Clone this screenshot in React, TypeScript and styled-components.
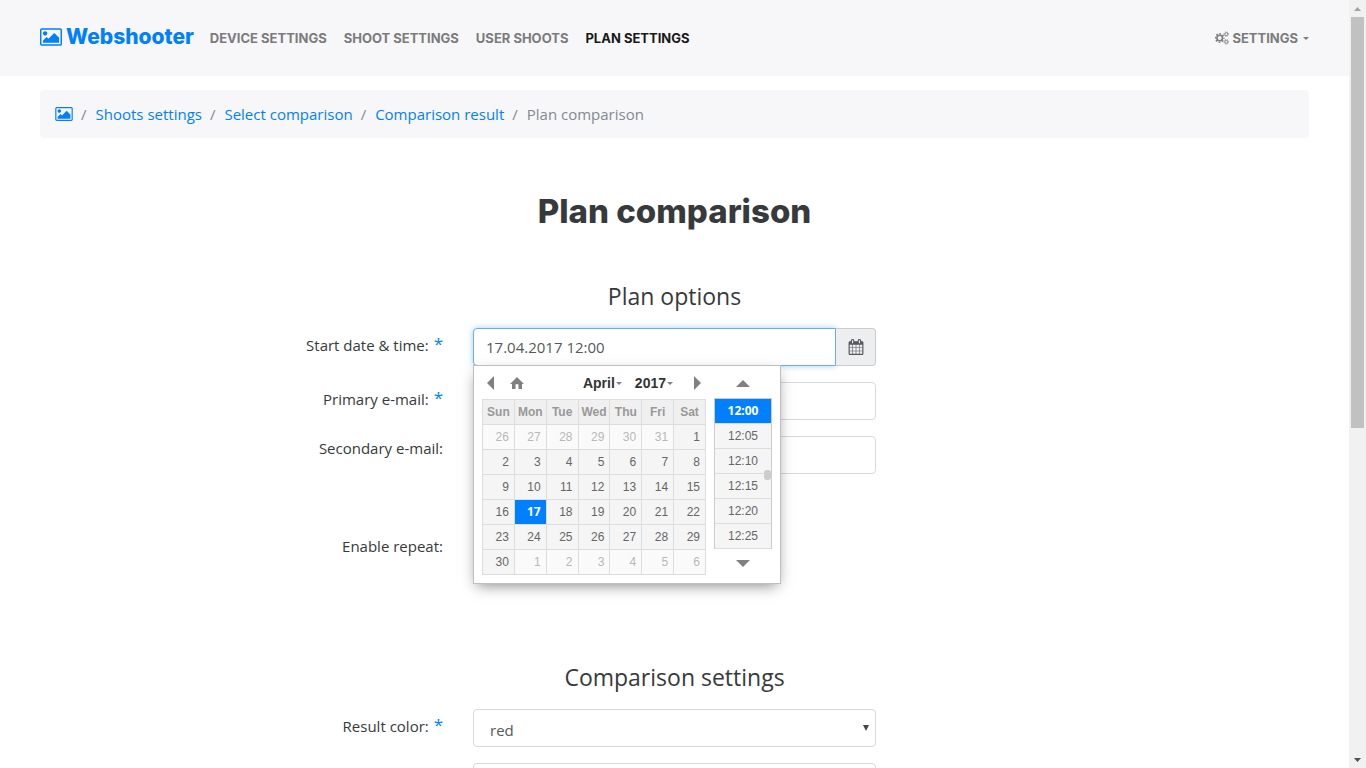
import React from "react";
import styled, { createGlobalStyle, css } from "styled-components";

const blue = "#007fff";
const bodyFont = `"Open Sans", "Noto Sans", sans-serif`;
const displayFont = `Inter, "Liberation Sans", sans-serif`;

const GlobalStyle = createGlobalStyle`
  *, *::before, *::after { box-sizing: border-box; }
  body {
    margin: 0;
    background: #fff;
    color: #373a3c;
    font: 15px/24px ${bodyFont};
  }
  button, input, select { font: inherit; color: inherit; }
  button { padding: 0; border: 0; background: none; cursor: pointer; }
  a { color: ${blue}; text-decoration: none; }
  svg { display: block; }
`;

const Screen = styled.div`
  display: grid;
  grid-template-columns: minmax(0, 1fr) 17px;
  height: 100vh;
  overflow: hidden;
`;

const Page = styled.div`
  overflow: hidden;
`;

const Navbar = styled.nav`
  display: flex;
  align-items: center;
  height: 76px;
  padding: 0 40px;
  background: #f7f7f9;
  font-family: ${displayFont};
`;

const Brand = styled.a`
  display: flex;
  align-items: center;
  gap: 4px;
  margin-right: 16px;
  padding-bottom: 2px;
  font-size: 21px;
  font-weight: 800;
`;

const NavList = styled.ul`
  display: flex;
  gap: 17px;
  margin: 0;
  padding: 0;
  list-style: none;
`;

const navText = css`
  font-size: 13px;
  font-weight: 700;
  text-transform: uppercase;
`;

const NavLink = styled.a<{ $active?: boolean }>`
  ${navText}
  color: ${(p) => (p.$active ? "#19191a" : "#7b7b7d")};
`;

const SettingsButton = styled.button`
  ${navText}
  display: flex;
  align-items: center;
  gap: 3px;
  margin-left: auto;
  color: #7b7b7d;
`;

const Caret = styled.span<{ $size: number }>`
  display: inline-block;
  margin-left: ${(p) => p.$size - 1}px;
  border: ${(p) => p.$size}px solid transparent;
  border-top-color: currentColor;
  border-bottom: 0;
`;

const Main = styled.main`
  padding: 14px 40px;
`;

const Breadcrumb = styled.ol`
  display: flex;
  align-items: center;
  height: 48px;
  margin: 0;
  padding: 0 15px;
  border-radius: 4px;
  background: #f7f7f9;
  list-style: none;
`;

const Crumb = styled.li`
  display: flex;
  align-items: center;
  color: #818a91;
  & + &::before {
    content: "/";
    padding: 0 9px 0 8px;
  }
`;

const Title = styled.h1`
  margin: 53px 0 0;
  font: 800 33px/40px ${displayFont};
  text-align: center;
`;

const SectionTitle = styled.h2<{ $top: number }>`
  margin: ${(p) => p.$top}px 0 17px;
  font-size: 23px;
  font-weight: 400;
  line-height: 30px;
  text-align: center;
`;

const FormRow = styled.div`
  display: grid;
  grid-template-columns: repeat(3, minmax(0, 1fr));
  column-gap: 30px;
  min-height: 38px;
  margin-bottom: 16px;
`;

const Label = styled.label<{ $required?: boolean }>`
  padding-top: ${(p) => (p.$required ? 5 : 0)}px;
  text-align: right;
`;

const Star = styled.span`
  margin-left: 1px;
  color: ${blue};
  font-size: 17px;
  line-height: 1;
  vertical-align: 1px;
`;

const Field = styled.div`
  position: relative;
`;

const control = css`
  width: 100%;
  height: 38px;
  padding: 0 12px;
  border: 1px solid #d9d9d9;
  border-radius: 4px;
  background: #fff;
  color: #55595c;
  outline: none;
`;

const TextInput = styled.input`
  ${control}
`;

const InputGroup = styled.div`
  display: flex;
`;

const DateInput = styled.input`
  ${control}
  flex: 1;
  border-color: #66afe9;
  border-radius: 4px 0 0 4px;
  box-shadow: 0 0 6px rgba(102, 175, 233, 0.6);
`;

const CalendarButton = styled.button`
  display: grid;
  place-items: center;
  width: 40px;
  height: 38px;
  border: 1px solid #ccc;
  border-left: 0;
  border-radius: 0 4px 4px 0;
  background: #eceeef;
`;

const Select = styled.select`
  ${control}
  padding: 4px 16px 0;
  appearance: none;
`;

const SelectArrow = styled.svg`
  position: absolute;
  top: 16px;
  right: 7px;
  pointer-events: none;
`;

const CheckRow = styled(FormRow)`
  margin-top: 60px;
`;

const CheckBox = styled.input`
  width: 13px;
  height: 13px;
  margin: 6px 0;
`;

const Picker = styled.div`
  position: absolute;
  z-index: 2;
  top: 37px;
  left: 0;
  display: flex;
  gap: 8px;
  padding: 8px;
  border: 1px solid #bfbfbf;
  background: #fff;
  box-shadow: 0 5px 14px -4px rgba(0, 0, 0, 0.5);
  color: #666;
  font: 12px/24px "Liberation Sans", Arial, sans-serif;
`;

const PickerHead = styled.div`
  display: flex;
  align-items: center;
  height: 18px;
  margin-bottom: 7px;
  padding: 0 5px;
`;

const IconButton = styled.button`
  display: grid;
  place-items: center;
  color: #808080;
`;

const HomeButton = styled(IconButton)`
  margin: 0 auto 0 16px;
`;

const MonthButton = styled.button`
  display: flex;
  align-items: center;
  margin-right: 13px;
  color: #333;
  font-size: 14px;
  font-weight: 700;
`;

const NextButton = styled(IconButton)`
  margin-left: 8px;
`;

const SmallCaret = styled(Caret)`
  margin-left: 1px;
  color: #808080;
`;

const Days = styled.table`
  width: 224px;
  border-collapse: collapse;
  table-layout: fixed;
`;

const DayName = styled.th`
  height: 25px;
  padding: 0;
  border: 1px solid #ddd;
  background: #f0f0f0;
  color: #999;
`;

const Day = styled.td<{ $off?: boolean; $selected?: boolean }>`
  height: 25px;
  padding: 0 5px 0 0;
  border: 1px solid #ddd;
  background: #f5f5f5;
  text-align: right;
  ${(p) => p.$off && css`background: #fafafa; color: #b8b8b8;`}
  ${(p) => p.$selected && css`background: ${blue}; color: #fff; font-family: ${bodyFont}; font-weight: 700;`}
`;

const Times = styled.div`
  width: 58px;
`;

const TimeArrow = styled(IconButton)`
  width: 100%;
  height: 18px;
`;

const TimeList = styled.div`
  position: relative;
  margin: 6px 0 5px;
  border: 1px solid #ccc;
  border-bottom: 0;
`;

const Time = styled.button<{ $selected?: boolean }>`
  display: block;
  width: 100%;
  height: 25px;
  border-bottom: 1px solid #ddd;
  background: #f5f5f5;
  line-height: 24px;
  ${(p) => p.$selected && css`background: ${blue}; color: #fff; font-family: ${bodyFont}; font-weight: 700;`}
`;

const TimeThumb = styled.span`
  position: absolute;
  top: 71px;
  right: 0;
  width: 7px;
  height: 10px;
  border-radius: 3px;
  background: #ccc;
`;

const ScrollTrack = styled.div`
  display: flex;
  flex-direction: column;
  align-items: center;
  background: #f1f1f1;
`;

const ScrollEnd = styled.div<{ $color: string }>`
  display: grid;
  place-items: center;
  height: 17px;
  color: ${(p) => p.$color};
`;

const ScrollThumb = styled.div`
  flex: 56;
  width: 13px;
  background: #c1c1c1;
`;

const ScrollRest = styled.div`
  flex: 44;
`;

const Picture = ({ width, height }: { width: number; height: number }) => (
  <svg width={width} height={height} viewBox="0 128 1920 1536" fill={blue} aria-hidden="true">
    <path d="M640 576q0 80-56 136t-136 56-136-56-56-136 56-136 136-56 136 56 56 136zm1024 384v448h-1408v-192l320-320 160 160 512-512zm96-704h-1600q-13 0-22.5 9.5t-9.5 22.5v1216q0 13 9.5 22.5t22.5 9.5h1600q13 0 22.5-9.5t9.5-22.5v-1216q0-13-9.5-22.5t-22.5-9.5zm160 32v1216q0 66-47 113t-113 47h-1600q-66 0-113-47t-47-113v-1216q0-66 47-113t113-47h1600q66 0 113 47t47 113z" />
  </svg>
);

const CalendarIcon = () => (
  <svg width="16" height="16" viewBox="0 0 1792 1792" fill="#55595c" aria-hidden="true">
    <path d="M192 1664h288v-288h-288v288zm352 0h320v-288h-320v288zm-352-352h288v-320h-288v320zm352 0h320v-320h-320v320zm-352-384h288v-288h-288v288zm736 736h320v-288h-320v288zm-384-736h320v-288h-320v288zm768 736h288v-288h-288v288zm-384-352h320v-320h-320v320zm-352-864v-288q0-13-9.5-22.5t-22.5-9.5h-64q-13 0-22.5 9.5t-9.5 22.5v288q0 13 9.5 22.5t22.5 9.5h64q13 0 22.5-9.5t9.5-22.5zm736 864h288v-320h-288v320zm-384-384h320v-288h-320v288zm384 0h288v-288h-288v288zm32-480v-288q0-13-9.5-22.5t-22.5-9.5h-64q-13 0-22.5 9.5t-9.5 22.5v288q0 13 9.5 22.5t22.5 9.5h64q13 0 22.5-9.5t9.5-22.5zm384-64v1280q0 52-38 90t-90 38h-1408q-52 0-90-38t-38-90v-1280q0-52 38-90t90-38h128v-96q0-66 47-113t113-47h64q66 0 113 47t47 113v96h384v-96q0-66 47-113t113-47h64q66 0 113 47t47 113v96h128q52 0 90 38t38 90z" />
  </svg>
);

const Gear = ({ cx, cy, r, w }: { cx: number; cy: number; r: number; w: number }) => {
  const tooth = (2 * Math.PI * (r + w * 0.9)) / 16;
  return (
    <g fill="none" stroke="currentColor">
      <circle cx={cx} cy={cy} r={r} strokeWidth={w} />
      <circle cx={cx} cy={cy} r={r + w * 0.9} strokeWidth={w * 0.9} strokeDasharray={`${tooth} ${tooth}`} strokeDashoffset={tooth / 2} />
    </g>
  );
};

const Cogs = () => (
  <svg width="14" height="14" viewBox="0 0 14 14" aria-hidden="true">
    <Gear cx={4.7} cy={7} r={2.8} w={1.6} />
    <Gear cx={11.3} cy={3.2} r={1.5} w={0.9} />
    <Gear cx={11.3} cy={10.8} r={1.5} w={0.9} />
  </svg>
);

const Triangle = ({ w, h, points }: { w: number; h: number; points: string }) => (
  <svg width={w} height={h} viewBox={`0 0 ${w} ${h}`} fill="currentColor" aria-hidden="true">
    <polygon points={points} />
  </svg>
);

const Required = () => <Star aria-hidden="true">*</Star>;

const navItems = ["Device settings", "Shoot settings", "User shoots", "Plan settings"];
const crumbs = ["Shoots settings", "Select comparison", "Comparison result"];
const dayNames = ["Sun", "Mon", "Tue", "Wed", "Thu", "Fri", "Sat"];
const times = ["12:00", "12:05", "12:10", "12:15", "12:20", "12:25"];

const weeks = Array.from({ length: 6 }, (_, week) =>
  Array.from({ length: 7 }, (_, day) => {
    const date = new Date(2017, 2, 26 + week * 7 + day);
    return { date: date.getDate(), off: date.getMonth() !== 3 };
  })
);

const DateTimePicker = () => (
  <Picker role="dialog" aria-label="Choose date and time">
    <div>
      <PickerHead>
        <IconButton type="button" aria-label="Previous month">
          <Triangle w={7} h={14} points="7,0 7,14 0,7" />
        </IconButton>
        <HomeButton type="button" aria-label="Today">
          <svg width="14" height="12" viewBox="0 0 14 12" fill="currentColor" aria-hidden="true">
            <path d="M7 0L14 7H12V12H8.5V8Q8.5 7 7 7Q5.500 7 5.500 8V12H2V7H0Z" />
          </svg>
        </HomeButton>
        <MonthButton type="button">April<SmallCaret $size={3} /></MonthButton>
        <MonthButton type="button">2017<SmallCaret $size={3} /></MonthButton>
        <NextButton type="button" aria-label="Next month">
          <Triangle w={7} h={14} points="0,0 7,7 0,14" />
        </NextButton>
      </PickerHead>
      <Days>
        <thead>
          <tr>{dayNames.map((name) => <DayName key={name}>{name}</DayName>)}</tr>
        </thead>
        <tbody>
          {weeks.map((week, i) => (
            <tr key={i}>
              {week.map(({ date, off }) => (
                <Day key={date} $off={off} $selected={!off && date === 17}>{date}</Day>
              ))}
            </tr>
          ))}
        </tbody>
      </Days>
    </div>
    <Times>
      <TimeArrow type="button" aria-label="Earlier">
        <Triangle w={14} h={7} points="7,0 14,7 0,7" />
      </TimeArrow>
      <TimeList>
        {times.map((time) => (
          <Time type="button" key={time} $selected={time === "12:00"}>{time}</Time>
        ))}
        <TimeThumb />
      </TimeList>
      <TimeArrow type="button" aria-label="Later">
        <Triangle w={14} h={7} points="0,0 14,0 7,7" />
      </TimeArrow>
    </Times>
  </Picker>
);

export default function App() {
  return (
    <Screen>
      <GlobalStyle />
      <Page>
        <Navbar>
          <Brand href="#"><Picture width={22} height={18} />Webshooter</Brand>
          <NavList>
            {navItems.map((item) => (
              <li key={item}>
                <NavLink href="#" $active={item === "Plan settings"}>{item}</NavLink>
              </li>
            ))}
          </NavList>
          <SettingsButton type="button"><Cogs />Settings<Caret $size={3} /></SettingsButton>
        </Navbar>
        <Main>
          <Breadcrumb>
            <Crumb><a href="#" aria-label="Home"><Picture width={18} height={14} /></a></Crumb>
            {crumbs.map((crumb) => <Crumb key={crumb}><a href="#">{crumb}</a></Crumb>)}
            <Crumb>Plan comparison</Crumb>
          </Breadcrumb>
          <Title>Plan comparison</Title>
          <form>
            <SectionTitle $top={50}>Plan options</SectionTitle>
            <FormRow>
              <Label htmlFor="start" $required>Start date &amp; time: <Required /></Label>
              <Field>
                <InputGroup>
                  <DateInput id="start" defaultValue="17.04.2017 12:00" />
                  <CalendarButton type="button" aria-label="Open calendar"><CalendarIcon /></CalendarButton>
                </InputGroup>
                <DateTimePicker />
              </Field>
            </FormRow>
            <FormRow>
              <Label htmlFor="primary" $required>Primary e-mail: <Required /></Label>
              <Field><TextInput id="primary" type="email" /></Field>
            </FormRow>
            <FormRow>
              <Label htmlFor="secondary">Secondary e-mail:</Label>
              <Field><TextInput id="secondary" type="email" /></Field>
            </FormRow>
            <CheckRow>
              <Label htmlFor="repeat">Enable repeat:</Label>
              <Field><CheckBox id="repeat" type="checkbox" /></Field>
            </CheckRow>
            <SectionTitle $top={90}>Comparison settings</SectionTitle>
            <FormRow>
              <Label htmlFor="color" $required>Result color: <Required /></Label>
              <Field>
                <Select id="color" defaultValue="red"><option>red</option></Select>
                <SelectArrow width="6" height="6" viewBox="0 0 6 6" fill="#444" aria-hidden="true">
                  <polygon points="0,0 6,0 3,6" />
                </SelectArrow>
              </Field>
            </FormRow>
            <FormRow>
              <span />
              <Field><TextInput aria-label="Comparison value" /></Field>
            </FormRow>
          </form>
        </Main>
      </Page>
      <ScrollTrack aria-hidden="true">
        <ScrollEnd $color="#a3a3a3"><Triangle w={7} h={4} points="3.5,0 7,4 0,4" /></ScrollEnd>
        <ScrollThumb />
        <ScrollRest />
        <ScrollEnd $color="#505050"><Triangle w={7} h={4} points="0,0 7,0 3.5,4" /></ScrollEnd>
      </ScrollTrack>
    </Screen>
  );
}
